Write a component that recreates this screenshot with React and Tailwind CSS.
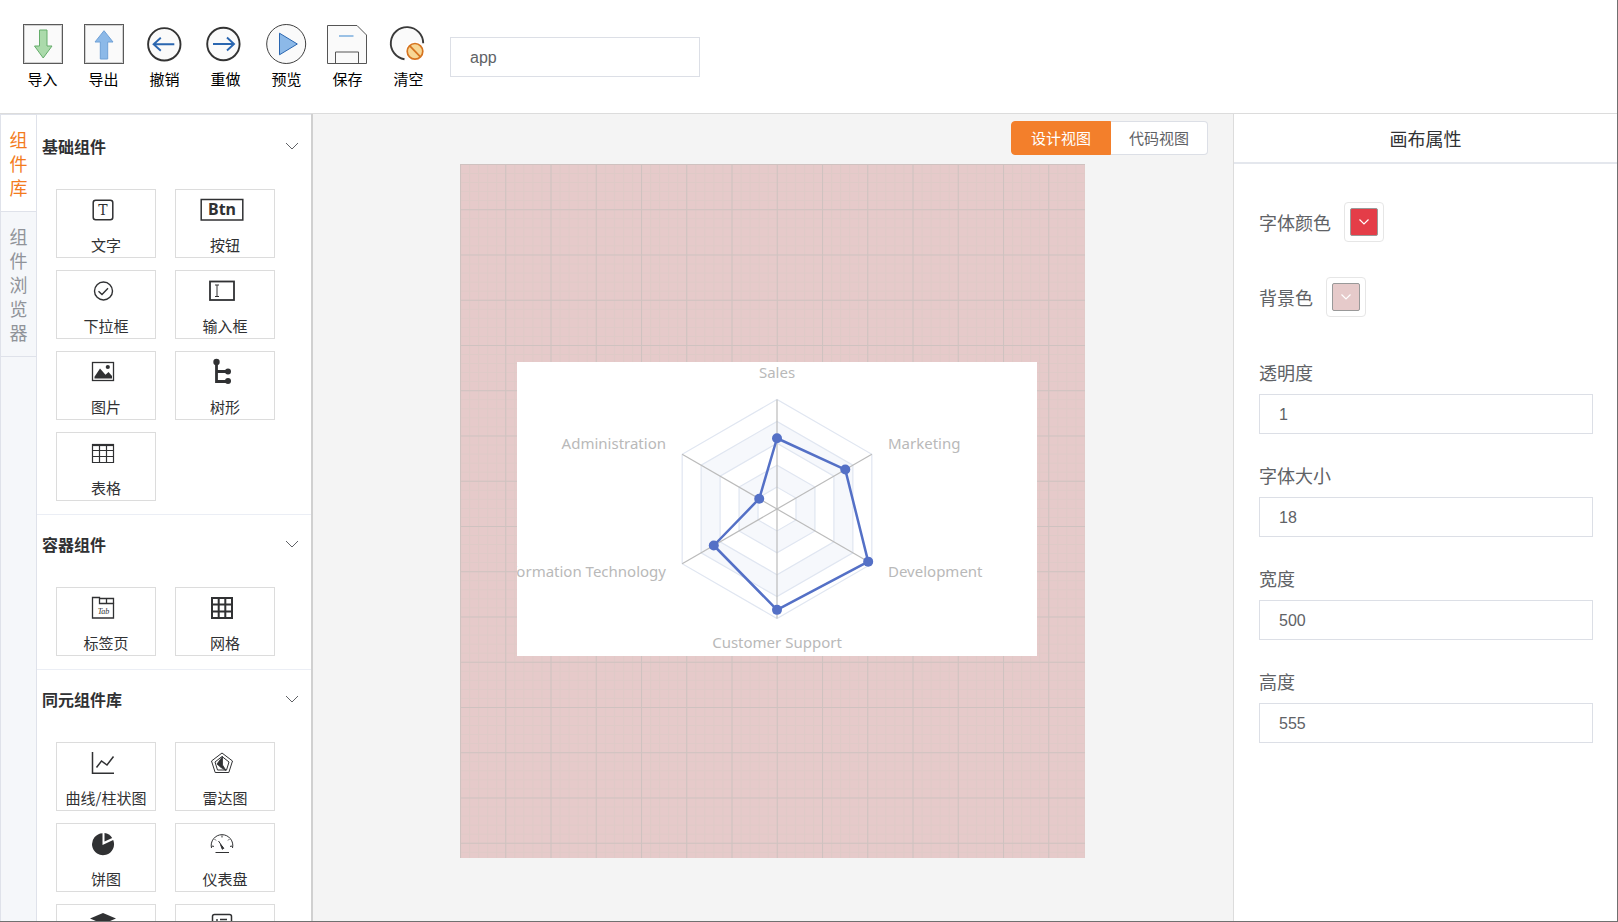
import React, { useState } from 'react';
import clsx from 'clsx';

// ---------- toolbar icons ----------

const ImportIcon = () => (
  <svg width="40" height="40" viewBox="0 0 40 40">
    <rect x="0.5" y="0.5" width="39" height="39" fill="#fafafa" stroke="#5a5a5a" />
    <path d="M1.500 38.500V1.500h37v37z" fill="none" stroke="#d0d0d0" />
    <path d="M16.500 6h7.500v16h5L20.200 34 11.500 22h5z" fill="#abdaab" stroke="#65ad6b" />
  </svg>
);

const ExportIcon = () => (
  <svg width="40" height="40" viewBox="0 0 40 40">
    <rect x="0.5" y="0.5" width="39" height="39" fill="#fafafa" stroke="#5a5a5a" />
    <path d="M1.500 38.500V1.500h37v37z" fill="none" stroke="#d0d0d0" />
    <path d="M20 6.700L29 18h-5.300v17h-7.400V18H11z" fill="#8cb9e8" stroke="#6fa0d6" />
  </svg>
);

const UndoIcon = () => (
  <svg width="40" height="40" viewBox="0 0 40 40" fill="none">
    <circle cx="19.300" cy="20.300" r="16.200" fill="#fafafa" stroke="#333" strokeWidth="1.900" />
    <path d="M29.300 20.300H8.500M15.800 13.800L8.600 20.300l7.200 6.500" stroke="#2a66b0" strokeWidth="1.900" />
  </svg>
);

const RedoIcon = () => (
  <svg width="40" height="40" viewBox="0 0 40 40" fill="none">
    <circle cx="17.400" cy="20" r="16.200" fill="#fafafa" stroke="#333" strokeWidth="1.900" />
    <path d="M7 20h21M21 13.500l7 6.500-7 6.500" stroke="#2a66b0" strokeWidth="1.900" />
  </svg>
);

const PreviewIcon = () => (
  <svg width="40" height="40" viewBox="0 0 40 40" className="overflow-visible">
    <circle cx="19.200" cy="20" r="19.500" fill="#fafafa" stroke="#404040" />
    <path d="M12.500 9.200v21.600L30.300 20z" fill="#8cb9e8" stroke="#2a66b0" />
  </svg>
);

const SaveIcon = () => (
  <svg width="40" height="40" viewBox="0 0 40 40" fill="none" className="overflow-visible">
    <path d="M-0.500 1.500h29.500l9.500 9.500v28.500h-39z" fill="#fafafa" stroke="#555" />
    <path d="M7.500 39.500v-11.500h23v11.500" stroke="#555" />
    <path d="M11 12h14.500" stroke="#83b3e0" strokeWidth="1.600" />
  </svg>
);

const ClearIcon = () => (
  <svg width="40" height="40" viewBox="0 0 40 40" fill="none">
    <circle cx="18" cy="19.300" r="16" fill="#fafafa" />
    <path d="M34.200 19.300A16.200 16.200 0 1 0 15.500 35.300" stroke="#3a3a3a" strokeWidth="1.900" />
    <circle cx="26" cy="27.300" r="10" fill="#fff" />
    <circle cx="26" cy="27.300" r="7.800" fill="#f7d795" stroke="#d67420" strokeWidth="1.700" />
    <path d="M20.800 21.800l10.600 11" stroke="#d67420" strokeWidth="1.700" />
  </svg>
);

// ---------- component icons ----------

const TextIcon = () => (
  <svg width="24" height="24" viewBox="0 0 24 24" fill="none">
    <rect x="2.200" y="2.200" width="19.600" height="19.600" rx="2.500" stroke="#303133" strokeWidth="1.500" />
    <text x="12" y="16.500" textAnchor="middle" fontSize="14" fontFamily="DejaVu Serif, serif" fill="#303133">T</text>
  </svg>
);

const ButtonIcon = () => (
  <svg width="44" height="24" viewBox="0 0 44 24" fill="none">
    <rect x="1.200" y="1.500" width="41.600" height="20.500" stroke="#303133" strokeWidth="1.500" />
    <text x="22" y="17" textAnchor="middle" fontSize="16" fontWeight="700" fontFamily="Noto Sans, sans-serif" fill="#303133">Btn</text>
  </svg>
);

const SelectIcon = () => (
  <svg width="24" height="24" viewBox="0 0 24 24" fill="none" stroke="#303133" strokeWidth="1.400">
    <circle cx="12.500" cy="12" r="9" />
    <path d="M7.500 12.200l3.500 3.300 6-6.300" />
  </svg>
);

const InputIcon = () => (
  <svg width="26" height="24" viewBox="0 0 26 24" fill="none" stroke="#303133">
    <rect x="1" y="2.500" width="24" height="18.500" strokeWidth="1.800" />
    <path d="M6 6h4M8 6v11.500M6 17.500h4" strokeWidth="1" />
  </svg>
);

const ImageIcon = () => (
  <svg width="24" height="24" viewBox="0 0 24 24" fill="none">
    <rect x="1.500" y="2.500" width="21" height="18" stroke="#303133" strokeWidth="1.300" />
    <path d="M3.500 18.500v-1.800L9 8.500l5.500 6.200 3-2.700 3.500 4v2.500z" fill="#303133" />
    <circle cx="16.800" cy="7" r="2.100" fill="#303133" />
  </svg>
);

const TreeIcon = () => (
  <svg width="24" height="28" viewBox="0 0 24 28" fill="none">
    <path d="M6.500 3v20.500H18M6.500 13.500H18" stroke="#303133" strokeWidth="2.800" />
    <circle cx="6.500" cy="4" r="3.200" fill="#303133" />
    <circle cx="18" cy="13.500" r="3" fill="#303133" />
    <circle cx="18" cy="23" r="3" fill="#303133" />
  </svg>
);

const TableIcon = () => (
  <svg width="24" height="24" viewBox="0 0 24 24" fill="none" stroke="#303133">
    <path d="M1 4h22" strokeWidth="2.200" />
    <path d="M1.500 3v18.500h21V3M1.500 9.500h21M1.500 15.500h21M8.500 3v18.500M15.500 3v18.500" strokeWidth="1.200" />
  </svg>
);

const TabIcon = () => (
  <svg width="24" height="24" viewBox="0 0 24 24" fill="none" stroke="#303133">
    <path d="M1.500 1.500h7v6h14v14.500h-21z" strokeWidth="1.300" />
    <path d="M8.500 2.500h14v5M15.500 2.500v5" strokeWidth="1.300" />
    <text x="12.500" y="18" textAnchor="middle" fontSize="8" fontStyle="italic" fontFamily="Liberation Serif, serif" fill="#303133" stroke="none">Tab</text>
  </svg>
);

const GridIcon = () => (
  <svg width="24" height="24" viewBox="0 0 24 24" fill="none" stroke="#303133" strokeWidth="2">
    <path d="M2 2h20v20H2zM2 8.500h20M2 15.500h20M8.700 2v20M15.300 2v20" />
  </svg>
);

const LineChartIcon = () => (
  <svg width="24" height="24" viewBox="0 0 24 24" fill="none" stroke="#303133" strokeWidth="1.500">
    <path d="M1.500 1v21.300H23" />
    <path d="M5.500 16.500l5-6.500 5.500 4 6.500-8.500" />
  </svg>
);

const RadarIcon = () => (
  <svg width="24" height="24" viewBox="0 0 24 24" fill="none" stroke="#303133">
    <path d="M12 2l10.500 8-3.700 11.500H5.200L1.500 10z" strokeWidth="1" />
    <path d="M12 5.500l7 5.500-2.500 8h-9L5 11z" strokeWidth="1" />
    <path d="M12.500 5.500v8.500l3.500 5.500-5-3-4-3.500z" fill="#303133" strokeWidth="0.800" />
  </svg>
);

const PieIcon = () => (
  <svg width="24" height="24" viewBox="0 0 24 24" fill="#303133">
    <path d="M11.500 1.200V13l10.700-5A11 11 0 1 1 11.500 1.200z" />
    <path d="M13.500 1v8.600l7.700-3.700A11 11 0 0 0 13.500 1z" />
  </svg>
);

const GaugeIcon = () => (
  <svg width="24" height="24" viewBox="0 0 24 24" fill="none" stroke="#303133" strokeWidth="1">
    <path d="M1.500 16a10.800 10.800 0 1 1 21 0" />
    <path d="M12 3.500v2M4.700 7.200l1.200 1.200M19.300 7.200l-1.200 1.200M1.500 14l2.500.4M22.500 14l-2.500.4M5.500 20.500h13.500" />
    <path d="M8.500 9l4.500 6.500" />
    <path d="M10.500 12.500l3.300 3.800-1.500 1z" fill="#303133" />
  </svg>
);

const LayersIcon = () => (
  <svg width="28" height="24" viewBox="0 0 28 24" fill="#303133">
    <path d="M14 0l13 5.500L14 11 1 5.500z" />
    <path d="M1 11l13 5.500L27 11M1 16l13 5.500L27 16" fill="none" stroke="#303133" strokeWidth="2" />
  </svg>
);

const FormIcon = () => (
  <svg width="24" height="24" viewBox="0 0 24 24" fill="none" stroke="#303133">
    <rect x="2.500" y="1.500" width="19" height="21" rx="2" strokeWidth="1.500" />
    <path d="M7 6v12M10 6.500h7M12 10h5" strokeWidth="1.400" />
  </svg>
);

const ArrowDown = ({ className }) => (
  <svg width="14" height="8" viewBox="0 0 14 8" fill="none" stroke="currentColor" className={className}>
    <path d="M1 1l6 6 6-6" />
  </svg>
);

// ---------- data ----------

const actions = [
  { label: '导入', Icon: ImportIcon },
  { label: '导出', Icon: ExportIcon },
  { label: '撤销', Icon: UndoIcon },
  { label: '重做', Icon: RedoIcon },
  { label: '预览', Icon: PreviewIcon },
  { label: '保存', Icon: SaveIcon },
  { label: '清空', Icon: ClearIcon },
];

const sections = [
  {
    title: '基础组件',
    items: [
      { label: '文字', Icon: TextIcon },
      { label: '按钮', Icon: ButtonIcon },
      { label: '下拉框', Icon: SelectIcon },
      { label: '输入框', Icon: InputIcon },
      { label: '图片', Icon: ImageIcon },
      { label: '树形', Icon: TreeIcon },
      { label: '表格', Icon: TableIcon },
    ],
  },
  {
    title: '容器组件',
    items: [
      { label: '标签页', Icon: TabIcon },
      { label: '网格', Icon: GridIcon },
    ],
  },
  {
    title: '同元组件库',
    items: [
      { label: '曲线/柱状图', Icon: LineChartIcon },
      { label: '雷达图', Icon: RadarIcon },
      { label: '饼图', Icon: PieIcon },
      { label: '仪表盘', Icon: GaugeIcon },
      { label: '', Icon: LayersIcon },
      { label: '', Icon: FormIcon },
    ],
  },
];

const fields = [
  { id: 'opacity', label: '透明度' },
  { id: 'fontSize', label: '字体大小' },
  { id: 'width', label: '宽度' },
  { id: 'height', label: '高度' },
];

const indicators = [
  { name: 'Sales', value: 4200, max: 6500, x: 260, y: 16, anchor: 'middle' },
  { name: 'Administration', value: 3000, max: 16000, x: 149, y: 87, anchor: 'end' },
  { name: 'Information Technology', value: 20000, max: 30000, x: 149, y: 215, anchor: 'end' },
  { name: 'Customer Support', value: 35000, max: 38000, x: 260, y: 286, anchor: 'middle' },
  { name: 'Development', value: 50000, max: 52000, x: 371, y: 215, anchor: 'start' },
  { name: 'Marketing', value: 18000, max: 25000, x: 371, y: 87, anchor: 'start' },
];

const CX = 260;
const CY = 147;
const R = 109.5;

// indicators run counter-clockwise from the top
const pointAt = (i, ratio) => {
  const angle = Math.PI / 2 + (i * Math.PI) / 3;
  return [CX + Math.cos(angle) * R * ratio, CY - Math.sin(angle) * R * ratio];
};

const ring = (ratio) => indicators.map((_, i) => pointAt(i, ratio).join(',')).join(' ');

// ---------- pieces ----------

const RadarChart = () => {
  const points = indicators.map((item, i) => pointAt(i, item.value / item.max));

  return (
    <svg width="520" height="294" viewBox="0 0 520 294" className="block bg-white">
      {[1, 0.8, 0.6, 0.4, 0.2].map((ratio, i) => (
        <polygon key={ratio} points={ring(ratio)} fill={i % 2 ? '#f6f8fc' : '#fff'} stroke="#e0e6f1" strokeWidth="1.2" />
      ))}
      {indicators.map((item, i) => {
        const [x, y] = pointAt(i, 1);
        return <line key={item.name} x1={CX} y1={CY} x2={x} y2={y} stroke="#bbb" strokeWidth="1.2" />;
      })}
      <polygon points={points.map((p) => p.join(',')).join(' ')} fill="none" stroke="#5470c6" strokeWidth="2.5" strokeLinejoin="round" />
      {points.map(([x, y], i) => (
        <circle key={i} cx={x} cy={y} r="5" fill="#5470c6" />
      ))}
      {indicators.map((item) => (
        <text key={item.name} x={item.x} y={item.y} textAnchor={item.anchor} fontSize="15" fontFamily="Noto Sans, sans-serif" fill="#b9b9b9">
          {item.name}
        </text>
      ))}
    </svg>
  );
};

const CanvasGrid = () => (
  <svg className="absolute inset-0 w-full h-full">
    <defs>
      <pattern id="minor" width="9.05" height="9.05" patternUnits="userSpaceOnUse">
        <path d="M0 0.500h9.050M0.500 0v9.050" stroke="#d5cac4" strokeOpacity="0.4" />
      </pattern>
      <pattern id="major" width="45.25" height="45.25" patternUnits="userSpaceOnUse">
        <path d="M0 0.500h45.250M0.500 0v45.250" stroke="#cbc0be" strokeOpacity="0.8" />
      </pattern>
    </defs>
    <rect width="100%" height="100%" fill="url(#minor)" />
    <rect width="100%" height="100%" fill="url(#major)" />
  </svg>
);

const ComponentCard = ({ label, Icon }) => (
  <button className="h-[69px] pt-2 flex flex-col items-center gap-3 bg-white border border-[#dcdcdc] text-[#303133]">
    <span className="h-6 mr-1.5 flex items-center justify-center">
      <Icon />
    </span>
    <span className="text-[15px] leading-[22px]">{label}</span>
  </button>
);

const Section = ({ title, items }) => {
  const [open, setOpen] = useState(true);

  return (
    <section className="border-b border-[#ebeef5]">
      <button
        onClick={() => setOpen(!open)}
        className="w-full h-[58px] pl-[5px] pr-3 flex items-center justify-between text-base font-bold text-[#303133]"
      >
        <span>{title}</span>
        <ArrowDown className="text-[#606266]" />
      </button>
      {open && (
        <div className="grid grid-cols-[100px_100px] gap-x-[19px] gap-y-3 pt-3.5 pb-[13px] pl-[19px]">
          {items.map((item, i) => (
            <ComponentCard key={i} {...item} />
          ))}
        </div>
      )}
    </section>
  );
};

const ColorField = ({ id, label, swatch }) => (
  <div className="flex items-center gap-[13px]">
    <label htmlFor={id}>{label}</label>
    <button id={id} className="w-10 h-10 p-[5px] bg-white border border-[#e6e6e6] rounded">
      <span className={clsx('h-full flex items-center justify-center border border-[#999] rounded-xs text-white', swatch)}>
        <svg width="10" height="6" viewBox="0 0 10 6" fill="none" stroke="currentColor" strokeWidth="1.200">
          <path d="M0.500 0.500L5 5 9.500 0.500" />
        </svg>
      </span>
    </button>
  </div>
);

const App = () => {
  const [name, setName] = useState('app');
  const [tab, setTab] = useState('组件库');
  const [view, setView] = useState('design');
  const [props, setProps] = useState({ opacity: '1', fontSize: '18', width: '500', height: '555' });

  const handlePropChange = (key, value) => {
    setProps((prev) => ({ ...prev, [key]: value }));
  };

  return (
    <div className="h-screen flex flex-col overflow-hidden bg-white border-b border-r border-[#707070] font-['Noto_Sans_CJK_SC',sans-serif]">
      {/* Toolbar */}
      <header className="h-[114px] shrink-0 pl-3 flex items-center border-b border-[#dcdcdc]">
        {actions.map(({ label, Icon }) => (
          <button key={label} className="w-[61px] flex flex-col items-center gap-1 text-[15px] leading-[22px] text-black">
            <Icon />
            <span>{label}</span>
          </button>
        ))}
        <input
          aria-label="name"
          value={name}
          onChange={(e) => setName(e.target.value)}
          className="ml-[11px] w-[250px] h-10 px-[19px] pt-0.5 border border-[#dcdfe6] text-base text-[#606266] font-['Liberation_Sans',sans-serif] outline-none"
        />
      </header>

      <div className="flex-1 min-h-0 flex">
        {/* Component library */}
        <aside className="w-[313px] shrink-0 flex border-r-2 border-[#d0d0d0]">
          <nav className="w-[37px] shrink-0 bg-[#f5f7fa] border-x border-t border-[#dfe2ea]">
            {['组件库', '组件浏览器'].map((item) => (
              <button
                key={item}
                onClick={() => setTab(item)}
                className={clsx(
                  'w-full px-2 py-3 block border-b border-[#dfe2ea] text-lg leading-6 break-all',
                  tab === item ? 'bg-white text-[#f37b1d]' : 'text-[#909399]'
                )}
              >
                {item}
              </button>
            ))}
          </nav>
          <div className="flex-1 pt-0.5 border-t border-[#e4e7ed] overflow-hidden">
            {sections.map((section) => (
              <Section key={section.title} {...section} />
            ))}
          </div>
        </aside>

        {/* Canvas */}
        <main className="flex-1 min-w-0 pr-0.5 flex flex-col items-center bg-[#f4f4f4] overflow-hidden">
          <div className="self-end h-[50px] pr-[23px] pt-[7px] flex text-[15px] leading-[30px]">
            <button
              onClick={() => setView('design')}
              className={clsx(
                'h-[34px] px-[19px] border rounded-l',
                view === 'design' ? 'bg-[#f37f2b] border-[#f37f2b] text-white' : 'bg-white border-[#dcdfe6] text-[#606266]'
              )}
            >
              设计视图
            </button>
            <button
              onClick={() => setView('code')}
              className={clsx(
                'h-[34px] px-[18px] border border-l-0 rounded-r',
                view === 'code' ? 'bg-[#f37f2b] border-[#f37f2b] text-white' : 'bg-white border-[#dcdfe6] text-[#606266]'
              )}
            >
              代码视图
            </button>
          </div>
          <div className="relative w-[625px] h-[694px] shrink-0 bg-[#e6caca]">
            <CanvasGrid />
            {/* placed widget */}
            <div className="absolute left-[57px] top-[198px]">
              <RadarChart />
            </div>
          </div>
        </main>

        {/* Canvas properties */}
        <aside className="w-[384px] shrink-0 bg-white border-l border-[#dcdcdc] text-lg text-[#606266]">
          <h2 className="h-[50px] flex items-center justify-center border-b-2 border-[#e4e7ed] text-[#303133]">画布属性</h2>
          <form className="pl-[25px] pr-6 pt-[38px]">
            <div className="flex flex-col gap-[35px]">
              <ColorField id="fontColor" label="字体颜色" swatch="bg-[#e43d48]" />
              <ColorField id="background" label="背景色" swatch="bg-[#e6caca]" />
            </div>
            <div className="mt-[37px] flex flex-col gap-[23px]">
              {fields.map(({ id, label }) => (
                <div key={id}>
                  <label htmlFor={id} className="h-9 mb-1 flex items-center">
                    {label}
                  </label>
                  <input
                    id={id}
                    value={props[id]}
                    onChange={(e) => handlePropChange(id, e.target.value)}
                    className="w-full h-10 px-[19px] pt-0.5 block border border-[#dcdfe6] text-base font-['Liberation_Sans',sans-serif] outline-none"
                  />
                </div>
              ))}
            </div>
          </form>
        </aside>
      </div>
    </div>
  );
};

export default App;
